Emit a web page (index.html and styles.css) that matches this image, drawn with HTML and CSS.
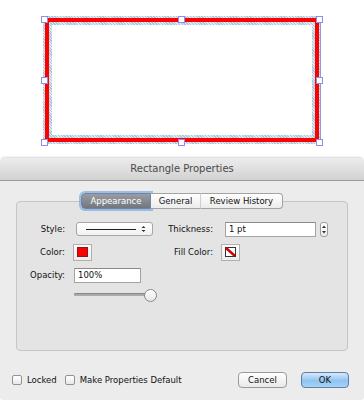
FILE: index.html
```html
<!DOCTYPE html>
<html lang="en">
<head>
    <meta charset="UTF-8">
    <meta name="viewport" content="width=device-width, initial-scale=1.0">
    <title>Rectangle Properties</title>
    <link rel="stylesheet" href="styles.css">
</head>
<body>
    <div class="canvas">
        <div class="shape">
            <div class="stroke">
                <div class="stroke-inner">
                    <div class="shape-fill"></div>
                </div>
            </div>
            <span class="handle h-tl"></span>
            <span class="handle h-tm"></span>
            <span class="handle h-tr"></span>
            <span class="handle h-ml"></span>
            <span class="handle h-mr"></span>
            <span class="handle h-bl"></span>
            <span class="handle h-bm"></span>
            <span class="handle h-br"></span>
        </div>
    </div>

    <div class="dialog">
        <div class="titlebar">Rectangle Properties</div>
        <div class="dialog-body">
            <div class="tabs">
                <span class="tab tab-active">Appearance</span>
                <span class="tab tab-general">General</span>
                <span class="tab tab-history">Review History</span>
            </div>
            <div class="group">
                <div class="form-grid">
                    <label class="lbl">Style:</label>
                    <div class="popup">
                        <span class="popup-line"></span>
                        <svg class="popup-arrows" width="5" height="8" viewBox="0 0 5 8">
                            <path d="M0.5 3 L2.5 1 L4.5 3 Z M0.5 5 L2.5 7 L4.5 5 Z" fill="#333"/>
                        </svg>
                    </div>
                    <label class="lbl">Thickness:</label>
                    <div class="thick-row">
                        <input class="field thick-field" type="text" value="1 pt">
                        <div class="stepper">
                            <svg width="8" height="15" viewBox="0 0 8 15">
                                <path d="M2 6 L4 3.5 L6 6 Z M2 9 L4 11.5 L6 9 Z" fill="#333"/>
                            </svg>
                        </div>
                    </div>

                    <label class="lbl">Color:</label>
                    <div class="swatch"><span class="swatch-red"></span></div>
                    <label class="lbl">Fill Color:</label>
                    <div class="swatch">
                        <svg class="swatch-none" width="11" height="10" viewBox="0 0 11 10">
                            <rect x="0.5" y="0.5" width="10" height="9" fill="#fff" stroke="#333"/>
                            <path d="M1 1 L10 9" stroke="#d10000" stroke-width="2.4"/>
                        </svg>
                    </div>

                    <label class="lbl">Opacity:</label>
                    <input class="field opacity-field" type="text" value="100%">
                    <span></span>
                    <span></span>

                    <span></span>
                    <div class="slider">
                        <span class="slider-track"></span>
                        <span class="slider-knob"></span>
                    </div>
                </div>
            </div>
            <div class="footer">
                <label class="check"><span class="box"></span>Locked</label>
                <label class="check"><span class="box"></span>Make Properties Default</label>
                <div class="buttons">
                    <button class="btn">Cancel</button>
                    <button class="btn btn-ok">OK</button>
                </div>
            </div>
        </div>
    </div>
</body>
</html>
```

FILE: styles.css
```css
body {
    margin: 0;
    width: 364px;
    height: 400px;
    overflow: hidden;
    background-color: #fff;
    font-family: "DejaVu Sans", sans-serif;
    font-size: 8.5px;
    color: #111;
}

/* drawing area */
.canvas {
    height: 158px;
    padding-top: 16px;
    padding-left: 43px;
    box-sizing: border-box;
}
.shape {
    position: relative;
    width: 278px;
    height: 128px;
    padding: 2px;
    box-sizing: border-box;
    background: repeating-linear-gradient(45deg, #a9c6dc 0 1px, #dde9f2 1px 2px);
    box-shadow: inset -1px 0 0 #8f96f0;
}
.stroke {
    height: 100%;
    border: 4px solid #ff0000;
    box-sizing: border-box;
}
.stroke-inner {
    height: 100%;
    padding: 3px;
    box-sizing: border-box;
    background: repeating-linear-gradient(45deg, #a9c6dc 0 1px, #dde9f2 1px 2px);
}
.shape-fill {
    height: 100%;
    background-color: #fff;
}
.handle {
    position: absolute;
    width: 5px;
    height: 5px;
    background-color: #fff;
    border: 1px solid #8f8cf0;
}
.h-tl { left: -2px; top: 0; }
.h-tm { left: 135px; top: 0; }
.h-tr { left: 273px; top: 0; }
.h-ml { left: -2px; top: 61px; }
.h-mr { left: 273px; top: 61px; }
.h-bl { left: -2px; top: 123px; }
.h-bm { left: 135px; top: 123px; }
.h-br { left: 273px; top: 123px; }

/* dialog */
.dialog {
    height: 242px;
    background-color: #ececec;
    border-radius: 5px 5px 4px 4px;
    overflow: hidden;
    box-shadow: 0 -1px 2px rgba(0,0,0,0.15);
}
.titlebar {
    height: 22px;
    line-height: 22px;
    text-align: center;
    font-size: 10px;
    color: #4a4a4a;
    background: linear-gradient(#ececec, #d2d2d2);
    border-bottom: 1px solid #9d9d9d;
}
.dialog-body {
    padding-top: 12px;
}
.tabs {
    position: relative;
    z-index: 1;
    display: flex;
    justify-content: center;
    height: 16px;
    margin-bottom: -8px;
}
.tab {
    height: 16px;
    line-height: 15px;
    box-sizing: border-box;
    text-align: center;
    color: #111;
    background: linear-gradient(#ffffff, #ececec);
    border: 1px solid #a3a3a3;
    border-left: none;
}
.tab-active {
    width: 70px;
    border-left: 1px solid #6f8fb8;
    border-color: #6a86ad;
    border-radius: 4px 0 0 4px;
    color: #fff;
    background: linear-gradient(#9a9da3, #72767d);
    box-shadow: 0 0 0 2px rgba(110,160,220,0.6);
}
.tab-general {
    width: 50px;
    border-right-color: #cfcfcf;
}
.tab-history {
    width: 82px;
    border-radius: 0 4px 4px 0;
    border-right: 1px solid #a3a3a3;
}

.group {
    margin: 0 16px;
    height: 150px;
    box-sizing: border-box;
    background-color: #e4e4e4;
    border: 1px solid #c6c6c6;
    border-radius: 4px;
    padding-top: 19px;
}
.form-grid {
    display: grid;
    grid-template-columns: 48px 82px 48px 1fr;
    grid-template-rows: 16px 18px 16px 12px;
    column-gap: 9px;
    row-gap: 6px;
    align-items: center;
}
.lbl {
    text-align: right;
    white-space: nowrap;
}
.popup {
    display: flex;
    align-items: center;
    justify-content: space-between;
    margin-left: 2px;
    width: 77px;
    height: 14px;
    box-sizing: border-box;
    padding: 0 6px 0 9px;
    background: linear-gradient(#ffffff, #f1f1f1);
    border: 1px solid #a6a6a6;
    border-radius: 3px;
}
.popup-line {
    width: 50px;
    height: 1px;
    background-color: #222;
}
.thick-row {
    display: flex;
    align-items: center;
    gap: 4px;
}
.field {
    height: 15px;
    box-sizing: border-box;
    border: 1px solid #a3a3a3;
    border-top-color: #8a8a8a;
    background-color: #fff;
    padding: 0 3px;
    font-family: "DejaVu Sans", sans-serif;
    font-size: 8.5px;
    color: #111;
    outline: none;
}
.thick-field {
    margin-left: 3px;
    width: 91px;
}
.opacity-field {
    width: 67px;
}
.stepper {
    display: flex;
    width: 8px;
    height: 15px;
    box-sizing: border-box;
    border: 1px solid #9c9c9c;
    border-radius: 3px;
    background: linear-gradient(#fff, #ececec);
    overflow: hidden;
    justify-content: center;
    align-items: center;
}
.stepper svg {
    display: block;
    flex-shrink: 0;
}
.swatch {
    margin-left: -1px;
    width: 19px;
    height: 17px;
    box-sizing: border-box;
    display: flex;
    align-items: center;
    justify-content: center;
    background: linear-gradient(#fbfbfb, #ececec);
    border: 1px solid #b0b0b0;
}
.swatch-red {
    width: 9px;
    height: 8px;
    background-color: #ff0000;
    border: 1px solid #8a1a1a;
}
.swatch-none {
    display: block;
}
.slider {
    position: relative;
    width: 83px;
    height: 12px;
}
.slider-track {
    position: absolute;
    left: 0;
    right: 4px;
    top: 4px;
    height: 3px;
    border-radius: 2px;
    background-color: #a9a9a9;
    box-shadow: inset 0 1px 0 #888;
}
.slider-knob {
    position: absolute;
    right: 0;
    top: 0;
    width: 11px;
    height: 11px;
    border-radius: 50%;
    background: linear-gradient(#ffffff, #e6e6e6);
    border: 1px solid #888;
}

/* bottom row */
.footer {
    display: flex;
    align-items: center;
    height: 16px;
    margin-top: 21px;
    padding: 0 15px 0 12px;
}
.check {
    display: flex;
    align-items: center;
    gap: 5px;
    margin-right: 8px;
}
.box {
    width: 10px;
    height: 10px;
    box-sizing: border-box;
    border: 1px solid #929292;
    border-radius: 2px;
    background: linear-gradient(#ffffff, #e8e8e8);
}
.buttons {
    margin-left: auto;
    display: flex;
    gap: 14px;
}
.btn {
    width: 49px;
    height: 16px;
    padding: 0;
    font-family: "DejaVu Sans", sans-serif;
    font-size: 8.5px;
    color: #111;
    background: linear-gradient(#ffffff, #e9e9e9);
    border: 1px solid #9a9a9a;
    border-radius: 4px;
}
.btn-ok {
    width: 48px;
    border-color: #5f7fa8;
    background: linear-gradient(#d6e9fb, #8fc3f0 55%, #a9d3f6);
}
```
